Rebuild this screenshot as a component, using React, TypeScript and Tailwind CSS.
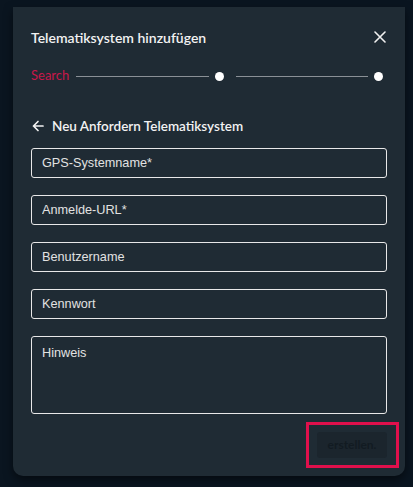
import React from 'react';

const fields = ['GPS-Systemname*', 'Anmelde-URL*', 'Benutzername', 'Kennwort'];

const App: React.FC = () => {
  return (
    <div className="w-[413px] h-[487px] bg-[#0a1520] overflow-hidden" style={{ fontFamily: 'Lato, "Liberation Sans", sans-serif' }}>
      <div className="ml-[13px] mt-[7px] w-[392px] h-[469px] bg-[#1f2b34] rounded-b-[10px] px-[18px] pt-[20px] flex flex-col shadow-[0_4px_10px_rgba(0,0,0,0.5)]">
        {/* header */}
        <div className="flex items-center justify-between h-[20px]">
          <h2 className="text-[14px] font-semibold text-[#f2f2f2]">Telematiksystem hinzufügen</h2>
          <button className="text-[#f0f0f0] mr-[1px]">
            <svg width="12" height="12" viewBox="0 0 12 12" fill="none" stroke="currentColor" strokeWidth="1.6" strokeLinecap="round">
              <path d="M1 1l10 10M11 1L1 11" />
            </svg>
          </button>
        </div>

        {/* stepper */}
        <div className="flex items-center h-[20px] mt-[19px]">
          <span className="text-[13px] text-[#c8174a]">Search</span>
          <div className="flex-1 h-px bg-[#8a9096] ml-[7px] mr-[6px]" />
          <div className="w-[9px] h-[9px] rounded-full bg-white" />
          <div className="flex-1 h-px bg-[#8a9096] ml-[12px] mr-[6px]" />
          <div className="w-[9px] h-[9px] rounded-full bg-white mr-[4px]" />
        </div>

        {/* back row */}
        <div className="flex items-center h-[20px] mt-[30px] text-[#f2f2f2]">
          <svg width="12" height="12" viewBox="0 0 12 12" fill="none" stroke="currentColor" strokeWidth="1.7" strokeLinecap="round" strokeLinejoin="round" className="ml-[1px]">
            <path d="M11 6H1.5M6 1.5L1.5 6 6 10.5" />
          </svg>
          <span className="ml-[8px] text-[13.5px] font-semibold">Neu Anfordern Telematiksystem</span>
        </div>

        {/* form */}
        <div className="flex flex-col gap-[17px] mt-[12px]" style={{ fontFamily: '"Liberation Sans", Arial, sans-serif' }}>
          {fields.map((f) => (
            <input
              key={f}
              type="text"
              placeholder={f}
              className="h-[30px] w-full rounded-[3px] border border-[#e8e8e8] bg-transparent px-[10px] text-[12.7px] text-[#e6e6e6] placeholder:text-[#e2e2e2] outline-none"
            />
          ))}
          <textarea
            placeholder="Hinweis"
            className="h-[78px] w-full resize-none rounded-[3px] border border-[#e8e8e8] bg-transparent px-[10px] pt-[7px] text-[12.7px] text-[#e6e6e6] placeholder:text-[#e2e2e2] outline-none"
          />
        </div>

        {/* actions */}
        <div className="flex justify-end mt-[17px]">
          <div className="relative">
            <button className="h-[26px] w-[70px] rounded-[3px] bg-[#1b252d] text-[12px] font-bold text-[#121b22]">
              erstellen.
            </button>
            <div className="absolute -left-[11px] -top-[9px] -right-[12px] -bottom-[10px] border-[3px] border-[#e0104c]" />
          </div>
        </div>
      </div>
    </div>
  );
};

export default App;
